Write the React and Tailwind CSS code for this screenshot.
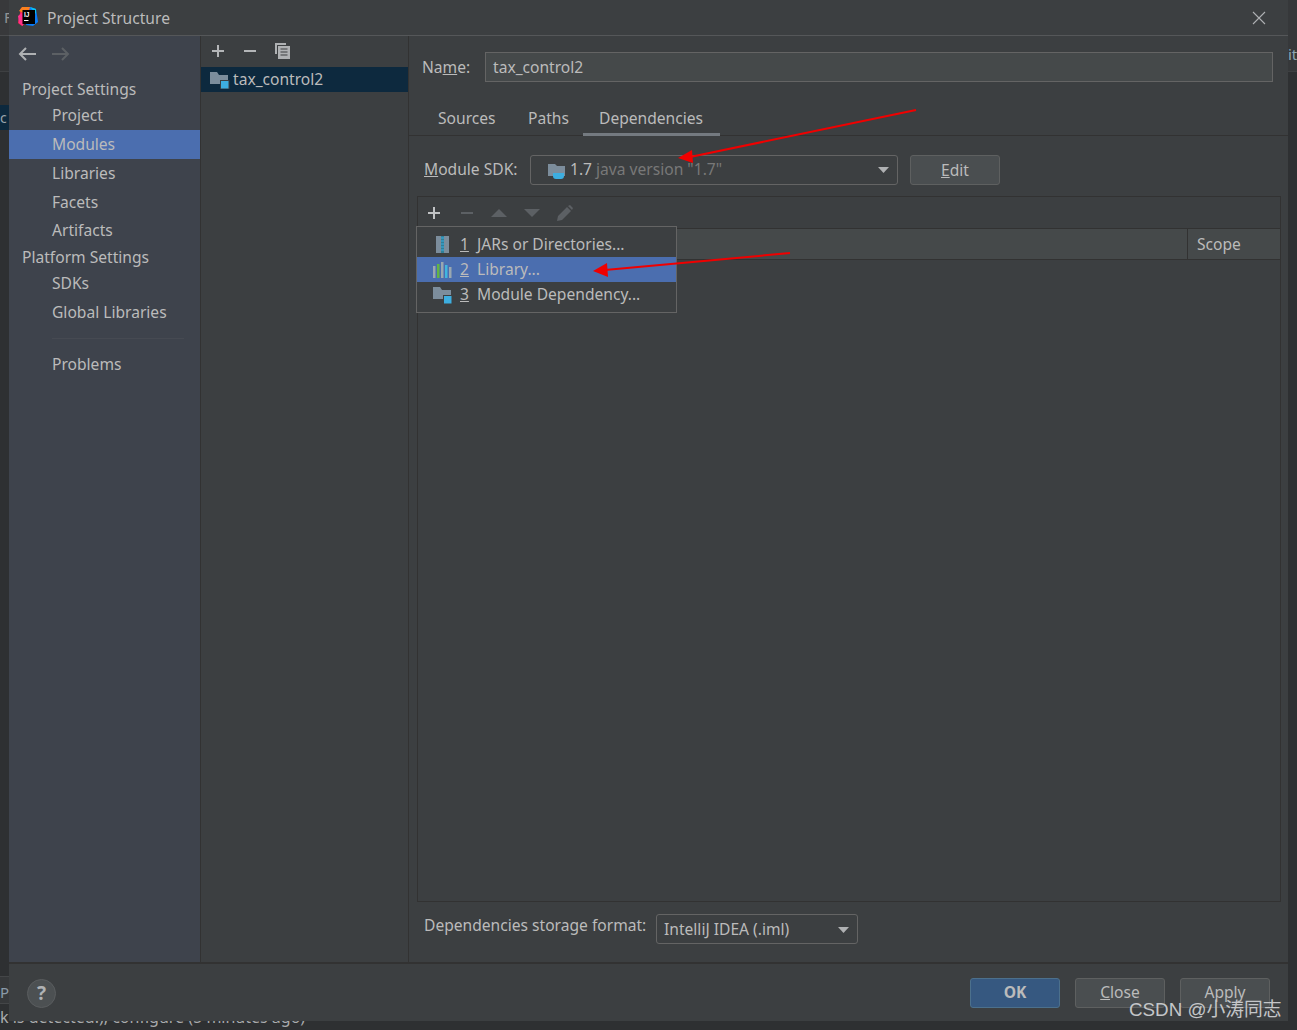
import React from "react";

const font = { fontFamily: '"Noto Sans", sans-serif' };

function FolderIcon({ className = "", badge = true }) {
  return (
    <svg width="20" height="18" viewBox="0 0 20 18" className={className}>
      <path d="M0 1h7l2 3h9v9h-18z" fill="#7c8d9c" />
      {badge && <rect x="10.5" y="9.5" width="8.5" height="8.5" fill="#3daee0" stroke="#3c3f41" strokeWidth="1" />}
    </svg>
  );
}

function SideItem({ label, h = "h-[29px]", active = false, extra = "" }) {
  return (
    <div className={`${h} ${extra} flex items-center pl-[43px] ${active ? "bg-[#4b6eaf]" : ""}`}>{label}</div>
  );
}

function Caret() {
  return (
    <svg width="11" height="6" viewBox="0 0 11 6">
      <path d="M0 0h11l-5.5 6z" fill="#afb1b3" />
    </svg>
  );
}

export default function App() {
  return (
    <div className="relative w-[1297px] h-[1030px] overflow-hidden bg-[#2e3032] text-[15.6px] text-[#bbbbbb] leading-none" style={font}>
      {/* IDE visible behind dialog */}
      <div className="absolute left-0 top-0 w-[9px] h-[36px] bg-[#38393b] border-b border-[#4a4c4e] pl-[4px] pt-[10px] text-[15px] text-[#8f9396]">F</div>
      <div className="absolute left-0 top-[36px] w-[9px] h-[36px] bg-[#333537] border-b border-[#3e4042]"></div>
      <div className="absolute left-0 top-[105px] w-[9px] h-[25px] bg-[#0d293e] pt-[6px] text-[14px] text-[#9aa5ad]">c</div>
      <div className="absolute left-0 top-[976px] w-[9px] h-[28px] bg-[#36383a] border-t border-b border-[#444648] pt-[8px] text-[15px] text-[#8a9aa8]">P</div>
      <div className="absolute left-0 top-[1009px] whitespace-nowrap text-[16px] text-[#a9abad]">k is detected!), configure (5 minutes ago)</div>
      <div className="absolute right-0 top-0 w-[9px] h-[72px] bg-[#36383a] border-b border-[#3e4042] pt-[47px] text-[15px] text-[#8fa6b3]">it</div>

      {/* Dialog */}
      <div className="absolute left-[9px] top-0 w-[1279px] h-[1021px] flex flex-col bg-[#3c3f41]">
        {/* Title bar */}
        <div className="h-[36px] shrink-0 flex items-center border-b border-[#555759] pl-[9px] pr-[22px]">
          <svg width="20" height="20" viewBox="0 0 20 20" className="mb-[1px]">
            <path d="M3 1l9-1 2 10-10 9-4-3z" fill="#fe2857" />
            <path d="M1 4l3-4h8l-2 8z" fill="#fc801d" />
            <path d="M0 9l4-3 1 13-4-3z" fill="#ff318c" />
            <path d="M12 0l6 2 2 13-5 4-7-1z" fill="#087cfa" />
            <path d="M12 0l6 2v5z" fill="#07c3f2" />
            <rect x="4.5" y="3" width="12.5" height="14" fill="#000" />
            <text x="6" y="9.5" fill="#fff" fontSize="6.5" fontWeight="700" fontFamily="Liberation Sans, sans-serif">IJ</text>
            <rect x="6" y="13" width="4.5" height="1" fill="#fff" />
          </svg>
          <span className="ml-[9px] mt-[2px]">Project Structure</span>
          <svg width="14" height="14" viewBox="0 0 14 14" className="ml-auto" stroke="#afb1b3" strokeWidth="1.1">
            <path d="M1 1l12 12M13 1l-12 12" />
          </svg>
        </div>

        {/* Body */}
        <div className="flex-1 min-h-0 flex">
          {/* Sidebar */}
          <div className="w-[192px] shrink-0 bg-[#3e434c] border-r border-[#323232]">
            <div className="h-[36px] flex items-center pl-[9px] gap-[16px]">
              <svg width="18" height="14" viewBox="0 0 18 14" fill="none" stroke="#afb1b3" strokeWidth="2">
                <path d="M18 7H2M8 1L2 7l6 6" />
              </svg>
              <svg width="18" height="14" viewBox="0 0 18 14" fill="none" stroke="#5c6064" strokeWidth="2">
                <path d="M0 7h16M10 1l6 6-6 6" />
              </svg>
            </div>
            <div className="h-[29px] mt-[3px] flex items-center pl-[13px]">Project Settings</div>
            <SideItem label="Project" h="h-[26px]" extra="pb-[2px]" />
            <SideItem label="Modules" active />
            <SideItem label="Libraries" />
            <SideItem label="Facets" />
            <SideItem label="Artifacts" h="h-[28px]" />
            <div className="h-[26px] flex items-center pl-[13px]">Platform Settings</div>
            <SideItem label="SDKs" h="h-[26px]" />
            <SideItem label="Global Libraries" h="h-[29px]" extra="pt-[3px]" />
            <div className="mt-[12px] mb-[11px] ml-[43px] mr-[16px] h-px bg-[#464a52]"></div>
            <SideItem label="Problems" />
          </div>

          {/* Module list */}
          <div className="w-[208px] shrink-0 border-r border-[#323232]">
            <div className="h-[31px] pb-[2px] flex items-center pl-[10px]">
              <svg width="14" height="14" viewBox="0 0 14 14" fill="none" stroke="#b4b6b8" strokeWidth="2"><path d="M7 1v12M1 7h12" /></svg>
              <svg width="14" height="14" viewBox="0 0 14 14" fill="none" stroke="#b4b6b8" strokeWidth="2" className="ml-[18px]"><path d="M1 7h12" /></svg>
              <svg width="17" height="17" viewBox="0 0 17 17" className="ml-[17px]">
                <path d="M1 1h11v2h-9v9h-2z" fill="#afb1b3" />
                <path d="M4 4h12v13h-12z" fill="#afb1b3" />
                <path d="M6.5 7h7M6.5 10h7M6.5 13h7" stroke="#3c3f41" strokeWidth="1.2" />
              </svg>
            </div>
            <div className="h-[25px] bg-[#0d293e] flex items-center pl-[9px] gap-[3px]">
              <FolderIcon className="mt-[1px]" />
              <span className="mt-[1px]">tax_control2</span>
            </div>
          </div>

          {/* Right content */}
          <div className="flex-1 min-w-0 flex flex-col">
            <div className="flex items-center pl-[13px] pr-[15px] mt-[16px]">
              <span className="w-[63px] pt-[2px]">Na<u>m</u>e:</span>
              <div className="flex-1 h-[30px] bg-[#45494a] border border-[#646464] flex items-center pl-[7px] pt-[2px]">tax_control2</div>
            </div>
            <div className="mt-[20px] h-[34px] pl-[13px] flex border-b border-[#323232]">
              <div className="w-[87px] pl-[16px] pt-[9px]">Sources</div>
              <div className="w-[87px] pl-[19px] pt-[9px]">Paths</div>
              <div className="w-[137px] -ml-[13px] pl-[16px] pt-[9px] h-[34px] border-b-[3px] border-[#747a80]">Dependencies</div>
            </div>
            <div className="mt-[19px] pl-[15px] flex items-center h-[30px]">
              <span className="w-[106px] mb-[1px]"><u>M</u>odule SDK:</span>
              <div className="w-[368px] h-[30px] border border-[#646464] rounded-[3px] flex items-center pl-[16px] pr-[8px]">
                <svg width="20" height="18" viewBox="0 0 20 18" className="mt-[1px]">
                  <path d="M1 2h7l2 2h8v10h-17z" fill="#7c8d9c" />
                  <path d="M6 11h11v3a3 3 0 0 1-3 3h-5a3 3 0 0 1-3-3z" fill="#3daee0" />
                </svg>
                <span className="ml-[3px]">1.7 <span className="text-[#787878]">java version "1.7"</span></span>
                <span className="ml-auto flex"><Caret /></span>
              </div>
              <button className="ml-[12px] w-[90px] h-[30px] pt-[2px] bg-[#4a4e50] border border-[#5e6060] rounded-[3px] text-[#bbbbbb]"><u>E</u>dit</button>
            </div>

            {/* Dependencies panel */}
            <div className="relative mt-[11px] ml-[8px] mr-[7px] flex-1 min-h-0 border border-[#323232] flex flex-col">
              <div className="h-[32px] flex items-center pl-[9px] border-b border-[#323232] shrink-0">
                <svg width="14" height="14" viewBox="0 0 14 14" fill="none" stroke="#c0c2c4" strokeWidth="2"><path d="M7 1v12M1 7h12" /></svg>
                <svg width="14" height="14" viewBox="0 0 14 14" fill="none" stroke="#5c6064" strokeWidth="2" className="ml-[19px]"><path d="M1 7h12" /></svg>
                <svg width="18" height="10" viewBox="0 0 18 10" className="ml-[16px]"><path d="M1 9L9 1l8 8z" fill="#5c6064" /></svg>
                <svg width="18" height="10" viewBox="0 0 18 10" className="ml-[15px]"><path d="M1 1h16L9 9z" fill="#5c6064" /></svg>
                <svg width="18" height="18" viewBox="0 0 18 18" className="ml-[15px]"><path d="M1 17l1-5L11 3l4 4-9 9zM12 2l2-1 3 3-1 2z" fill="#5c6064" /></svg>
              </div>
              <div className="h-[31px] shrink-0 bg-[#45494a] border-b border-[#323232] flex justify-end">
                <div className="w-[93px] border-l border-[#323232] pl-[9px] pt-[2px] flex items-center">Scope</div>
              </div>

              {/* Popup menu */}
              <div className="absolute left-[-2px] top-[29px] w-[261px] h-[87px] bg-[#3c3f41] border border-[#646464] pt-[5px]">
                <div className="h-[25px] flex items-center pl-[16px]">
                  <svg width="20" height="18" viewBox="0 0 20 18">
                    <rect x="3" y="0" width="13" height="17" fill="#7c8d9c" />
                    <rect x="8" y="0" width="3" height="17" fill="#2f7f99" />
                    <path d="M8 2h3M8 5h3M8 8h3M8 11h3M8 14h3" stroke="#3daee0" strokeWidth="1" />
                  </svg>
                  <span className="w-[17px] ml-[7px]"><u>1</u></span>
                  <span>JARs or Directories...</span>
                </div>
                <div className="h-[25px] bg-[#4b6eaf] flex items-center pl-[16px]">
                  <svg width="20" height="18" viewBox="0 0 20 18">
                    <rect x="0" y="5" width="2.5" height="12" fill="#9aa7b0" />
                    <rect x="4" y="3" width="2.5" height="14" fill="#62b543" />
                    <rect x="8" y="1" width="2.5" height="16" fill="#9aa7b0" />
                    <rect x="12" y="4" width="2.5" height="13" fill="#40b6e0" />
                    <rect x="16" y="6" width="2.5" height="11" fill="#9aa7b0" />
                  </svg>
                  <span className="w-[17px] ml-[7px]"><u>2</u></span>
                  <span>Library...</span>
                </div>
                <div className="h-[25px] flex items-center pl-[16px]">
                  <FolderIcon />
                  <span className="w-[17px] ml-[7px]"><u>3</u></span>
                  <span>Module Dependency...</span>
                </div>
              </div>
            </div>

            <div className="h-[60px] shrink-0 pl-[15px] pt-[12px] flex items-center self-stretch">
              <span className="w-[232px] mb-[24px]">Dependencies storage format:</span>
              <div className="w-[202px] h-[30px] mb-[18px] border border-[#646464] rounded-[3px] flex items-center pl-[7px] pr-[8px] pt-[2px]">
                <span>IntelliJ IDEA (.iml)</span>
                <span className="ml-auto flex"><Caret /></span>
              </div>
            </div>
          </div>
        </div>

        {/* Footer */}
        <div className="h-[59px] shrink-0 border-t-2 border-[#323232] flex items-center pl-[18px] pr-[18px] pt-[1px]">
          <div className="w-[29px] h-[29px] rounded-full bg-[#4c5052] border border-[#5a5d5f] flex items-center justify-center font-bold text-[19px] text-[#b0b2b4]">?</div>
          <button className="ml-auto w-[90px] h-[30px] bg-[#365880] border border-[#4c708c] rounded-[3px] font-bold text-[#bbbbbb]">OK</button>
          <button className="ml-[15px] w-[90px] h-[30px] bg-[#4a4e50] border border-[#5e6060] rounded-[3px]"><u>C</u>lose</button>
          <button className="ml-[15px] w-[90px] h-[30px] bg-[#4a4e50] border border-[#5e6060] rounded-[3px]">Apply</button>
        </div>
      </div>

      {/* Red annotation arrows */}
      <svg width="1297" height="1030" viewBox="0 0 1297 1030" className="absolute left-0 top-0 pointer-events-none">
        <path d="M916 110L690 157" stroke="#f00000" strokeWidth="2" />
        <path d="M678 158l14-8 1 13z" fill="#f00000" />
        <path d="M790 253L605 270" stroke="#f00000" strokeWidth="2" />
        <path d="M593 271l14-8 1 14z" fill="#f00000" />
      </svg>

      {/* Watermark */}
      <div className="absolute left-[1129px] top-[1001px] whitespace-nowrap text-[18.8px] text-[#c4c6c8]" style={{ fontFamily: '"Liberation Sans", "Noto Sans CJK SC", sans-serif' }}>CSDN @小涛同志</div>
    </div>
  );
}
